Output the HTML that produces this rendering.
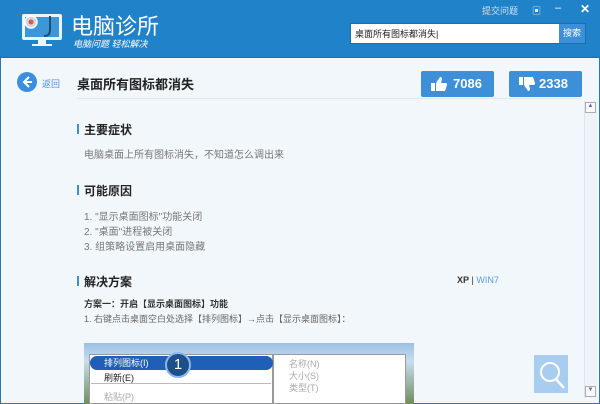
<!DOCTYPE html>
<html><head><meta charset="utf-8"><style>
*{margin:0;padding:0;box-sizing:border-box}
body{width:600px;height:404px;overflow:hidden;font-family:"Liberation Sans","Noto Sans CJK SC",sans-serif;background:#f2f7fb;position:relative}
.hdr{position:absolute;left:0;top:0;width:600px;height:58px;background:#2082c8;border-bottom:1px solid #1a6fae}
.main{position:absolute;left:0;top:58px;width:600px;height:346px;background:#f2f7fb;border-left:1px solid #2a78b0;border-right:1px solid #2a78b0;border-bottom:1px solid #2a78b0}
.abs{position:absolute}
.h{font-size:12px;color:#222;font-weight:bold}
.bar{position:absolute;width:2px;height:10px;background:#3d8fd0}
.t{font-size:10px;color:#777;position:absolute;white-space:nowrap}
.btn{position:absolute;height:26px;background:#3d8fd8;border-radius:2px;color:#fff;font-size:13px;font-weight:bold;line-height:26px}
</style></head><body>
<div class="hdr">
<svg class="abs" style="left:20px;top:10px" width="44" height="40" viewBox="0 0 44 40">
<rect x="2" y="4" width="40" height="26" rx="2" fill="#e9f4fb"/><rect x="5" y="7" width="34" height="20" fill="#3c97d4"/>
<rect x="18" y="30" width="8" height="4" fill="#e9f4fb"/><rect x="12" y="34" width="20" height="2" fill="#e9f4fb"/>
<circle cx="11" cy="12" r="6" fill="#cfd7dd" stroke="#fff" stroke-width="1.5"/><circle cx="11" cy="12" r="2.5" fill="#d55"/>
<path d="M30 6v14q0 6-6 6" stroke="#1c4f7a" stroke-width="2" fill="none"/>
</svg>
<div class="abs" style="left:71px;top:9px;color:#fff;font-size:22px">电脑诊所</div>
<div class="abs" style="left:73px;top:37px;color:#fff;font-size:9px;font-style:italic">电脑问题 轻松解决</div>
<div class="abs" style="left:482px;top:4px;color:#cfe4f5;font-size:9px">提交问题</div>
<div class="abs" style="left:532px;top:4px;color:#e0eef8;font-size:9px">▣</div>
<div class="abs" style="left:555px;top:2px;color:#fff;font-size:11px">–</div>
<div class="abs" style="left:580px;top:2px;color:#fff;font-size:12px;font-weight:bold">✕</div>
<div class="abs" style="left:350px;top:23px;width:236px;height:21px;background:#fff;border:1px solid #1a6fae"></div>
<div class="abs" style="left:355px;top:27px;font-size:9px;color:#222">桌面所有图标都消失|</div>
<div class="abs" style="left:559px;top:24px;width:26px;height:19px;background:#3d8fd8;color:#fff;font-size:9px;line-height:19px;text-align:center">搜索</div>
</div>
<div class="main">
<svg class="abs" style="left:15px;top:13px" width="22" height="22"><circle cx="11" cy="11" r="10" fill="#3e8ee0"/><path d="M13 6l-5 5 5 5M8 11h8" stroke="#fff" stroke-width="2" fill="none"/></svg>
<div class="abs" style="left:41px;top:19px;font-size:9px;color:#4a8ed8">返回</div>
<div class="abs" style="left:76px;top:16px;font-size:13px;color:#222;font-weight:bold">桌面所有图标都消失</div>
<div class="abs" style="left:76px;top:40px;width:504px;height:1px;background:#e0e8ef"></div>
<div class="btn" style="left:420px;top:13px;width:73px"><svg class="abs" style="left:10px;top:6px" width="16" height="14"><rect x="0" y="6" width="4" height="8" fill="#fff"/><path d="M5 6l4-6q2 0 2 2l-1 4h5q1 0 1 2l-2 6H5z" fill="#fff"/></svg><span style="position:absolute;left:32px">7086</span></div>
<div class="btn" style="left:508px;top:13px;width:73px"><svg class="abs" style="left:10px;top:6px" width="16" height="14"><rect x="0" y="0" width="4" height="8" fill="#fff"/><path d="M5 8l4 6q2 0 2-2l-1-4h5q1 0 1-2l-2-6H5z" fill="#fff"/></svg><span style="position:absolute;left:30px">2338</span></div>
<div class="bar" style="left:76px;top:66px"></div><div class="abs h" style="left:83px;top:63px">主要症状</div>
<div class="t" style="left:83px;top:88px">电脑桌面上所有图标消失，不知道怎么调出来</div>
<div class="bar" style="left:76px;top:127px"></div><div class="abs h" style="left:83px;top:124px">可能原因</div>
<div class="t" style="left:83px;top:150px">1. "显示桌面图标"功能关闭</div>
<div class="t" style="left:83px;top:165px">2. "桌面"进程被关闭</div>
<div class="t" style="left:83px;top:180px">3. 组策略设置启用桌面隐藏</div>
<div class="bar" style="left:76px;top:218px"></div><div class="abs h" style="left:83px;top:215px">解决方案</div>
<div class="abs" style="left:456px;top:217px;font-size:9px;color:#333"><b>XP</b> | <span style="color:#5aa0e0">WIN7</span></div>
<div class="abs" style="left:83px;top:239px;font-size:9px;color:#333;font-weight:bold">方案一：开启【显示桌面图标】功能</div>
<div class="t" style="left:83px;top:254px;font-size:9px;color:#666">1. 右键点击桌面空白处选择【排列图标】→点击【显示桌面图标】：</div>
<div class="abs" style="left:83px;top:285px;width:330px;height:61px;background:linear-gradient(#9cc0e6,#c8dcef 30%,#6f8e5a)"></div>
<div class="abs" style="left:88px;top:296px;width:184px;height:50px;background:#fff;border:1px solid #999"></div>
<div class="abs" style="left:89px;top:298px;width:183px;height:14px;background:#1f5fb8;border-radius:7px"></div>
<div class="abs" style="left:103px;top:298px;font-size:9px;color:#fff">排列图标(I)</div>
<div class="abs" style="left:103px;top:313px;font-size:9px;color:#222">刷新(E)</div>
<div class="abs" style="left:90px;top:325px;width:180px;height:1px;background:#bbb"></div>
<div class="abs" style="left:103px;top:332px;font-size:9px;color:#aaa">粘贴(P)</div>
<div class="abs" style="left:164px;top:294px;width:26px;height:26px;border-radius:13px;background:#1d4f88;border:2px solid #8cb8e8;color:#fff;font-size:15px;text-align:center;line-height:22px">1</div>
<div class="abs" style="left:272px;top:296px;width:133px;height:50px;background:#fff;border:1px solid #999"></div>
<div class="abs" style="left:288px;top:300px;font-size:9px;color:#aaa;line-height:12px">名称(N)<br>大小(S)<br>类型(T)</div>
<div class="abs" style="left:533px;top:297px;width:34px;height:38px;background:#a9cdee"></div>
<svg class="abs" style="left:536px;top:301px" width="30" height="32"><circle cx="13" cy="13" r="9" stroke="#fff" stroke-width="2" fill="none"/><path d="M19 20l8 9" stroke="#fff" stroke-width="2.5"/></svg>
<div class="abs" style="left:583px;top:43px;width:13px;height:297px;background:#eef3f7;border-left:1px solid #dde6ee"></div>
<div class="abs" style="left:584px;top:44px;width:11px;height:11px;border:1px solid #aab;background:#f6f9fb;font-size:6px;text-align:center;color:#667">▲</div>
<div class="abs" style="left:584px;top:328px;width:11px;height:11px;border:1px solid #aab;background:#f6f9fb;font-size:6px;text-align:center;color:#667">▼</div>
</div>
</body></html>
